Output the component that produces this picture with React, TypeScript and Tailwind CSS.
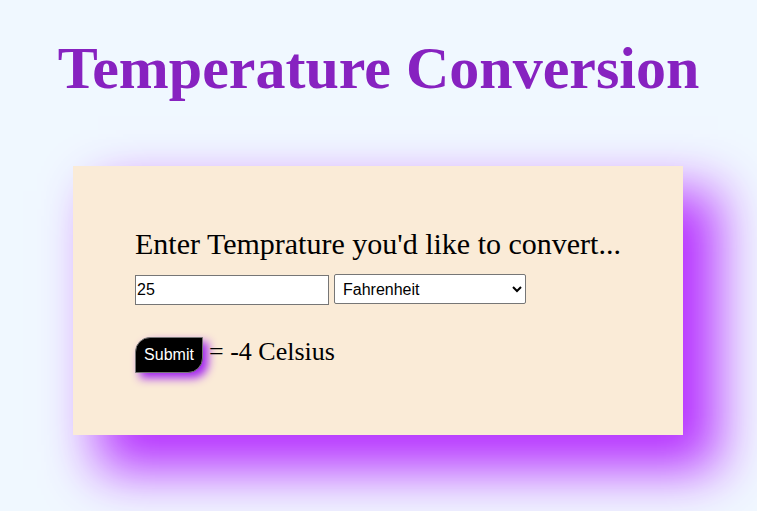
import { useState } from 'react'

export default function App() {
  const [value, setValue] = useState('25')
  const [unit, setUnit] = useState('Fahrenheit')

  return (
    <div className="min-h-screen w-full bg-[#f0f8ff] pt-[20px] font-['Liberation_Serif',serif] text-black">
      <h1 className="text-center text-[60px] font-bold leading-[96px] text-[#8722c0]">
        Temperature Conversion
      </h1>

      <div className="ml-[73px] mt-[50px] h-[269px] w-[610px] bg-[#faebd7] px-[62px] pt-[58px] shadow-[30px_30px_50px_5px_#b630ff]">
        <p className="text-[30px] leading-[40px]">Enter Temprature you'd like to convert...</p>

        <div className="mt-[11px] flex items-center gap-[5px] font-['Liberation_Sans',Arial,sans-serif] text-[16px]">
          <input
            value={value}
            onChange={(e) => setValue(e.target.value)}
            className="h-[30px] w-[194px] border border-[#767676] bg-white px-[1px] outline-none"
          />
          <select
            value={unit}
            onChange={(e) => setUnit(e.target.value)}
            className="-mt-[2px] h-[30px] w-[192px] rounded-[2px] border border-[#767676] bg-white pl-[4px]"
          >
            <option>Fahrenheit</option>
            <option>Celsius</option>
          </select>
        </div>

        <div className="mt-[27px] flex items-baseline">
          <button className="h-[36px] w-[68px] rounded-tl-[15px] rounded-br-[15px] border border-[#777] bg-black font-['Liberation_Sans',Arial,sans-serif] text-[16px] text-white shadow-[5px_5px_10px_#a020f0]">
            Submit
          </button>
          <span className="ml-[6px] text-[26px]">= -4 Celsius</span>
        </div>
      </div>
    </div>
  )
}
